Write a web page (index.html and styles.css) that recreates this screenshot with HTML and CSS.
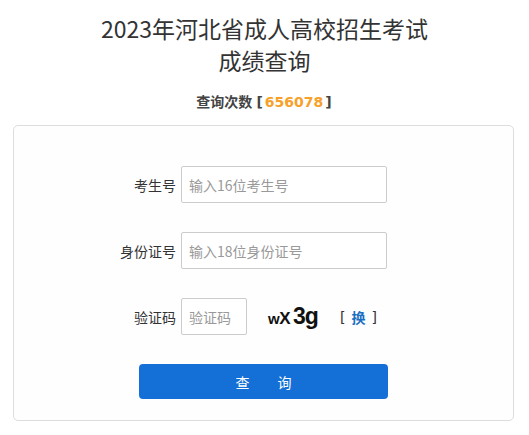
FILE: index.html
```html
<!DOCTYPE html>
<html lang="zh">
<head>
<meta charset="utf-8">
<title>成绩查询</title>
<link rel="stylesheet" href="styles.css">
</head>
<body>
<div class="page">
  <h1 class="title">2023年河北省成人高校招生考试<br>成绩查询</h1>
  <div class="counter">查询次数 <span class="br">[</span><span class="num">656078</span><span class="br">]</span></div>
  <div class="card">
    <div class="row">
      <label class="label">考生号</label>
      <input class="field" type="text" placeholder="输入16位考生号">
    </div>
    <div class="row">
      <label class="label">身份证号</label>
      <input class="field" type="text" placeholder="输入18位身份证号">
    </div>
    <div class="row">
      <label class="label">验证码</label>
      <input class="field small" type="text" placeholder="验证码">
      <div class="captcha"><span class="c1">w</span><span class="c2">X</span><span class="c3">3g</span></div>
      <span class="swap"><span class="sb">[</span><a class="swap-link">换</a><span class="sb">]</span></span>
    </div>
    <div class="actions">
      <button class="btn" type="button">查　　询</button>
    </div>
  </div>
</div>
</body>
</html>
```
FILE: styles.css
```css
* { box-sizing: border-box; }
html, body { margin: 0; padding: 0; background: #fff; }
body {
  font-family: "Microsoft YaHei", "Noto Sans CJK SC", sans-serif;
  color: #333;
}
.page { padding: 12px 13px 0 13px; }
.title {
  margin: 0;
  text-align: center;
  font-weight: normal;
  font-size: 23px;
  line-height: 32px;
  color: #333;
}
.counter {
  margin-top: 14px;
  text-align: center;
  font-size: 14px;
  font-weight: bold;
  line-height: 22px;
  color: #444;
}
.counter .br { font-family: "DejaVu Sans", sans-serif; font-weight: bold; color: #444; margin: 0 1px; }
.counter .num { color: #f7a12a; font-family: "DejaVu Sans", sans-serif; font-size: 14px; margin: 0 1px; }
.card {
  margin-top: 12px;
  width: 501px;
  height: 296px;
  border: 1px solid #ddd;
  border-radius: 5px;
  background: #fefefe;
  padding-top: 40px;
}
.row {
  display: flex;
  align-items: center;
  height: 37px;
  margin-bottom: 29px;
}
.label {
  width: 162px;
  text-align: right;
  font-size: 14px;
  color: #333;
  margin-right: 5px;
}
.field {
  width: 206px;
  height: 37px;
  border: 1px solid #ccc;
  border-radius: 2px;
  padding: 0 7px;
  font-family: "Microsoft YaHei", "Noto Sans CJK SC", sans-serif;
  font-size: 14px;
  color: #333;
  background: #fff;
  outline: none;
}
.field::placeholder { color: #999; }
.field.small { width: 66px; }
.captcha {
  margin-left: 21px;
  width: 56px;
  font-family: "Liberation Sans", Arial, sans-serif;
  font-weight: bold;
  color: #111;
  display: flex;
  align-items: baseline;
  letter-spacing: -0.5px;
}
.c1 { font-size: 15px; }
.c2 { font-size: 17px; }
.c3 { font-size: 23px; margin-left: 3px; letter-spacing: -1px; }
.swap {
  margin-left: 16px;
  font-size: 14px;
  font-weight: bold;
  color: #444;
  display: flex;
  align-items: center;
  gap: 6px;
}
.sb { font-family: "DejaVu Sans", sans-serif; font-weight: normal; color: #333; }
.swap-link { color: #1b6ec2; }
.actions { display: flex; justify-content: center; }
.btn {
  width: 249px;
  height: 35px;
  border: none;
  border-radius: 4px;
  background: #1470d6;
  color: #fff;
  font-family: "Microsoft YaHei", "Noto Sans CJK SC", sans-serif;
  font-size: 14px;
}
```
